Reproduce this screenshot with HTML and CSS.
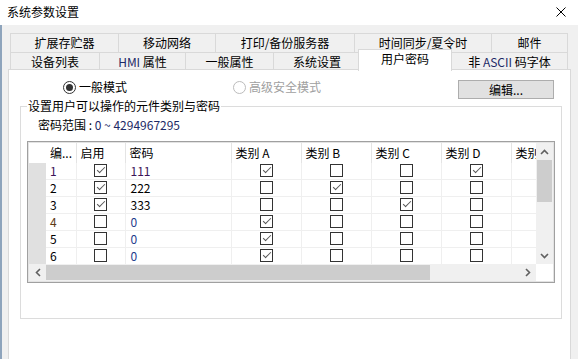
FILE: index.html
```html
<!DOCTYPE html>
<html lang="zh-CN">
<head>
    <meta charset="UTF-8">
    <meta name="viewport" content="width=device-width, initial-scale=1.0">
    <title>系统参数设置</title>
    <link rel="stylesheet" href="styles.css">
    <script>
        //用户密码 table 的数据 : 编号, 启用, 密码, 类别 A~D
        let userArray = [
            [1, 1, "111", 1, 0, 0, 1],
            [2, 1, "222", 0, 1, 0, 0],
            [3, 1, "333", 0, 0, 1, 0],
            [4, 0, "0", 1, 0, 0, 0],
            [5, 0, "0", 1, 0, 0, 0],
            [6, 0, "0", 1, 0, 0, 0]
        ];

        function box(on){
            return on ? "<span class='cb on'></span>" : "<span class='cb'></span>";
        }

        function printTable(){
            let tag = "<colgroup><col class='c-head'><col class='c-no'><col class='c-use'><col class='c-pwd'>";
            tag += "<col class='c-cat'><col class='c-cat'><col class='c-cat'><col class='c-cat'><col class='c-cat'></colgroup>";
            tag += "<tr class='head'><td class='rh'></td><td>编...</td><td>启用</td><td>密码</td>";
            tag += "<td>类别 A</td><td>类别 B</td><td>类别 C</td><td>类别 D</td><td>类别 E</td></tr>";

            for(let i=0; i<userArray.length; i++){
                let u = userArray[i];
                tag += "<tr>";
                tag += "<td class='rh'></td>";
                tag += `<td class='no n${u[0]}'>${u[0]}</td>`;
                tag += `<td class='mid'>${box(u[1])}</td>`;
                tag += `<td class='pwd ${u[2]=="0" ? "zero" : ""} ${i==0 ? "first" : ""}'>${u[2]}</td>`;
                for(let j=3; j<7; j++){
                    tag += `<td class='mid'>${box(u[j])}</td>`;
                }
                tag += "<td></td>";
                tag += "</tr>";
            }
            document.getElementById("userTable").innerHTML = tag;
        }

        addEventListener("load", function(){
            printTable();
        });
    </script>
</head>
<body>
    <div class="window">
        <div class="titlebar">
            <span class="title">系统参数设置</span>
            <svg class="close" width="10" height="10" viewBox="0 0 10 10">
                <path d="M0.5 0.5L9.5 9.5M9.5 0.5L0.5 9.5" stroke="#000" stroke-width="1" fill="none"/>
            </svg>
        </div>
        <div class="client">
            <div class="tabs">
                <div class="tab-row back">
                    <div class="tab">扩展存贮器</div>
                    <div class="tab">移动网络</div>
                    <div class="tab">打印/备份服务器</div>
                    <div class="tab">时间同步/夏令时</div>
                    <div class="tab last">邮件</div>
                </div>
                <div class="tab-row front">
                    <div class="tab">设备列表</div>
                    <div class="tab"><span class="latin">HMI</span> 属性</div>
                    <div class="tab">一般属性</div>
                    <div class="tab">系统设置</div>
                    <div class="tab active">用户密码</div>
                    <div class="tab last">非 <span class="latin">ASCII</span> 码字体</div>
                </div>
            </div>
            <div class="panel">
                <div class="mode-row">
                    <label class="radio"><span class="dot on"></span>一般模式</label>
                    <label class="radio off"><span class="dot"></span>高级安全模式</label>
                    <button class="btn-edit">编辑...</button>
                </div>
                <fieldset class="group">
                    <legend>设置用户可以操作的元件类别与密码</legend>
                    <div class="range">密码范围 : <span class="latin">0 ~ 4294967295</span></div>
                    <div class="grid">
                        <div class="cells">
                            <table id="userTable"></table>
                        </div>
                        <div class="vscroll">
                            <div class="arrow">
                                <svg width="9" height="6" viewBox="0 0 9 6"><path d="M1 5L4.5 1.5L8 5" stroke="#606060" stroke-width="1.6" fill="none"/></svg>
                            </div>
                            <div class="thumb"></div>
                            <div class="track"></div>
                            <div class="arrow">
                                <svg width="9" height="6" viewBox="0 0 9 6"><path d="M1 1L4.5 4.5L8 1" stroke="#606060" stroke-width="1.6" fill="none"/></svg>
                            </div>
                        </div>
                        <div class="hscroll">
                            <div class="arrow">
                                <svg width="6" height="9" viewBox="0 0 6 9"><path d="M5 1L1.5 4.5L5 8" stroke="#606060" stroke-width="1.6" fill="none"/></svg>
                            </div>
                            <div class="thumb"></div>
                            <div class="track"></div>
                            <div class="arrow">
                                <svg width="6" height="9" viewBox="0 0 6 9"><path d="M1 1L4.5 4.5L1 8" stroke="#606060" stroke-width="1.6" fill="none"/></svg>
                            </div>
                        </div>
                        <div class="corner"></div>
                    </div>
                </fieldset>
            </div>
        </div>
    </div>
</body>
</html>
```

FILE: styles.css
```css
body{
    margin: 0;
    font-family: "Noto Sans CJK SC", "Noto Sans", sans-serif;
    font-size: 12px;
    line-height: 14px;
    color: #000;
}
.window{
    width: 578px;
    height: 359px;
    overflow: hidden;
    background-color: #f0f0f0;
}
.titlebar{
    height: 25px;
    background-color: #fff;
    display: flex;
    align-items: center;
    padding: 0 12px 0 7px;
    box-sizing: border-box;
}
.title{
    flex: 1;
    margin-top: -1px;
}
.close{
    margin-top: -1px;
}
.latin{
    color: #1d2a66;
}

/* 탭 영역 */
.client{
    height: 334px;
    padding-top: 8px;
    box-sizing: border-box;
    box-shadow: inset 2px 0 0 #8ea4bc;
}
.tabs{
    margin-left: 10px;
    width: 558px;
}
.tab-row{
    display: grid;
}
.tab-row.back{
    grid-template-columns: 108px 97px 139px 137px 77px;
    height: 19px;
}
.tab-row.front{
    grid-template-columns: 89px 86px 88px 87px 91px 117px;
    height: 17px;
}
.tab{
    border-top: 1px solid #d9d9d9;
    border-left: 1px solid #d9d9d9;
    text-align: center;
    white-space: nowrap;
}
.tab.last{
    border-right: 1px solid #d9d9d9;
}
.back .tab{
    line-height: 18px;
}
.front .tab{
    line-height: 17px;
}
.tab.active{
    position: relative;
    z-index: 2;
    margin: -3px -1px -1px -2px;
    padding-top: 2px;
    background-color: #fff;
    border-right: 1px solid #d9d9d9;
    line-height: 14px;
}

.panel{
    margin-left: 8px;
    width: 563px;
    height: 290px;
    box-sizing: border-box;
    background-color: #fff;
    border: 1px solid #d9d9d9;
    border-bottom: none;
    overflow: hidden;
}
.mode-row{
    height: 29px;
    box-sizing: border-box;
    padding: 10px 16px 0 54px;
    display: flex;
    align-items: flex-start;
}
.radio{
    display: flex;
    align-items: center;
    width: 170px;
    height: 14px;
}
.radio.off{
    color: #a0a0a0;
}
.dot{
    width: 13px;
    height: 13px;
    box-sizing: border-box;
    border: 1px solid #333;
    border-radius: 50%;
    margin-right: 3px;
    display: flex;
    align-items: center;
    justify-content: center;
}
.dot.on::after{
    content: "";
    width: 7px;
    height: 7px;
    border-radius: 50%;
    background-color: #333;
}
.radio.off .dot{
    border-color: #bcbcbc;
}
.btn-edit{
    margin-left: auto;
    width: 96px;
    height: 19px;
    padding: 0;
    font: inherit;
    background-color: #e1e1e1;
    border: 1px solid #adadad;
    border-radius: 0;
}

.group{
    margin: 0 0 0 11px;
    width: 541px;
    height: 220px;
    box-sizing: border-box;
    border: 1px solid #dcdcdc;
    padding: 5px 6px 0 6px;
}
.group legend{
    padding: 0 1px;
    line-height: 14px;
}
.range{
    margin-left: 11px;
    height: 14px;
}
.grid{
    margin-top: 9px;
    width: 528px;
    height: 142px;
    box-sizing: border-box;
    border: 1px solid #a0a0a0;
    padding: 1px;
    background-color: #e3e3e3;
    display: grid;
    grid-template-columns: 1fr 17px;
    grid-template-rows: 1fr 17px;
}
.cells{
    background-color: #fff;
    overflow: hidden;
}
table{
    border-collapse: collapse;
    table-layout: fixed;
    width: 552px;
}
.c-head{ width: 17px; }
.c-no{ width: 30px; }
.c-use{ width: 49px; }
.c-pwd{ width: 106px; }
.c-cat{ width: 70px; }
td{
    padding: 0 0 0 4px;
    height: 16px;
    border-right: 1px solid #efefef;
    border-bottom: 1px solid #efefef;
    white-space: nowrap;
    overflow: hidden;
}
tr.head td{
    height: 20px;
    border-right-color: #e4e4e4;
    border-bottom: none;
}
td.rh{
    padding: 0;
    background-color: #e0e0e0;
    border-right: none;
    border-bottom: none;
}
tr.head td.rh{
    background-color: #fff;
}
td.pwd{
    padding-left: 5px;
}
td.mid{
    padding: 0;
    text-align: center;
    line-height: 0;
}
.n1, .first{
    color: #3c1458;
}
.n4{
    color: #5c3a14;
}
.zero{
    color: #1f3c8c;
}
.cb{
    display: inline-block;
    position: relative;
    width: 13px;
    height: 13px;
    box-sizing: border-box;
    border: 1px solid #333;
    background-color: #fff;
    vertical-align: middle;
    margin-top: -1px;
}
.cb.on::after{
    content: "";
    position: absolute;
    left: 4px;
    top: 0px;
    width: 3px;
    height: 7px;
    border-right: 1px solid #555;
    border-bottom: 1px solid #555;
    transform: rotate(45deg);
}

/* 스크롤바 */
.vscroll{
    display: grid;
    grid-template-rows: 17px 42px 1fr 17px;
    background-color: #f0f0f0;
}
.hscroll{
    display: grid;
    grid-template-columns: 17px 384px 1fr 17px;
    background-color: #f0f0f0;
}
.arrow{
    display: flex;
    align-items: center;
    justify-content: center;
}
.thumb{
    background-color: #cdcdcd;
}
.vscroll .thumb{
    margin: 0 1px;
}
.hscroll .thumb{
    margin: 1px 0;
}
.corner{
    background-color: #fff;
}
```
